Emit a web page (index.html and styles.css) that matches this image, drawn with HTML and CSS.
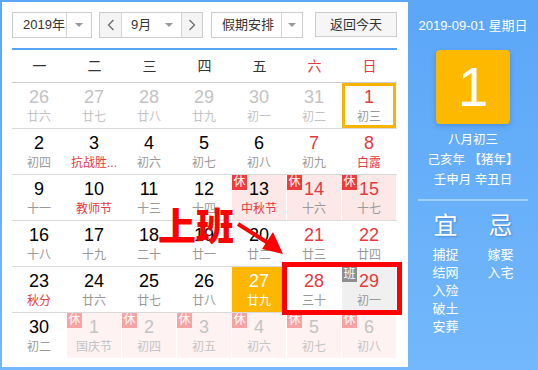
FILE: index.html
```html
<!DOCTYPE html>
<html lang="zh">
<head>
<meta charset="utf-8">
<title>万年历</title>
<link rel="stylesheet" href="styles.css">
</head>
<body>
<div class="app">
  <div class="main">
    <div class="toolbar">
      <div class="sel sel-year">
        <span class="sel-text">2019年</span>
        <span class="sel-arrow"><i class="tri"></i></span>
      </div>
      <div class="month">
        <span class="mbtn mbtn-prev"><svg width="8" height="12" viewBox="0 0 8 12"><polyline points="6.5,1 1.5,6 6.5,11" fill="none" stroke="#666" stroke-width="1.2"/></svg></span>
        <span class="mmid"><span class="mtext">9月</span><i class="tri"></i></span>
        <span class="mbtn mbtn-next"><svg width="8" height="12" viewBox="0 0 8 12"><polyline points="1.5,1 6.5,6 1.5,11" fill="none" stroke="#666" stroke-width="1.2"/></svg></span>
      </div>
      <div class="sel sel-hol">
        <span class="sel-text">假期安排</span>
        <span class="sel-arrow"><i class="tri"></i></span>
      </div>
      <div class="today-btn">返回今天</div>
    </div>
    <div class="bar"></div>
    <div class="weekhead">
      <span>一</span><span>二</span><span>三</span><span>四</span><span>五</span><span class="we">六</span><span class="we">日</span>
    </div>
    <div class="grid">
      <div class="row">
        <div class="cell other"><span class="n">26</span><span class="l">廿六</span></div>
        <div class="cell other"><span class="n">27</span><span class="l">廿七</span></div>
        <div class="cell other"><span class="n">28</span><span class="l">廿八</span></div>
        <div class="cell other"><span class="n">29</span><span class="l">廿九</span></div>
        <div class="cell other"><span class="n">30</span><span class="l">初一</span></div>
        <div class="cell other"><span class="n">31</span><span class="l">初二</span></div>
        <div class="cell today red"><span class="n">1</span><span class="l">初三</span></div>
      </div>
      <div class="row">
        <div class="cell"><span class="n">2</span><span class="l">初四</span></div>
        <div class="cell fest"><span class="n">3</span><span class="l">抗战胜...</span></div>
        <div class="cell"><span class="n">4</span><span class="l">初六</span></div>
        <div class="cell"><span class="n">5</span><span class="l">初七</span></div>
        <div class="cell"><span class="n">6</span><span class="l">初八</span></div>
        <div class="cell red"><span class="n">7</span><span class="l">初九</span></div>
        <div class="cell red fest"><span class="n">8</span><span class="l">白露</span></div>
      </div>
      <div class="row">
        <div class="cell"><span class="n">9</span><span class="l">十一</span></div>
        <div class="cell fest"><span class="n">10</span><span class="l">教师节</span></div>
        <div class="cell"><span class="n">11</span><span class="l">十三</span></div>
        <div class="cell"><span class="n">12</span><span class="l">十四</span></div>
        <div class="cell rest fest"><i class="tag">休</i><span class="n">13</span><span class="l">中秋节</span></div>
        <div class="cell rest red"><i class="tag">休</i><span class="n">14</span><span class="l">十六</span></div>
        <div class="cell rest red"><i class="tag">休</i><span class="n">15</span><span class="l">十七</span></div>
      </div>
      <div class="row">
        <div class="cell"><span class="n">16</span><span class="l">十八</span></div>
        <div class="cell"><span class="n">17</span><span class="l">十九</span></div>
        <div class="cell"><span class="n">18</span><span class="l">二十</span></div>
        <div class="cell"><span class="n">19</span><span class="l">廿一</span></div>
        <div class="cell"><span class="n">20</span><span class="l">廿二</span></div>
        <div class="cell red"><span class="n">21</span><span class="l">廿三</span></div>
        <div class="cell red"><span class="n">22</span><span class="l">廿四</span></div>
      </div>
      <div class="row">
        <div class="cell fest"><span class="n">23</span><span class="l">秋分</span></div>
        <div class="cell"><span class="n">24</span><span class="l">廿六</span></div>
        <div class="cell"><span class="n">25</span><span class="l">廿七</span></div>
        <div class="cell"><span class="n">26</span><span class="l">廿八</span></div>
        <div class="cell selected"><span class="n">27</span><span class="l">廿九</span></div>
        <div class="cell red"><span class="n">28</span><span class="l">三十</span></div>
        <div class="cell red work"><i class="tag tag-work">班</i><span class="n">29</span><span class="l">初一</span></div>
      </div>
      <div class="row row-last">
        <div class="cell"><span class="n">30</span><span class="l">初二</span></div>
        <div class="cell other rest"><i class="tag">休</i><span class="n">1</span><span class="l">国庆节</span></div>
        <div class="cell other rest"><i class="tag">休</i><span class="n">2</span><span class="l">初四</span></div>
        <div class="cell other rest"><i class="tag">休</i><span class="n">3</span><span class="l">初五</span></div>
        <div class="cell other rest"><i class="tag">休</i><span class="n">4</span><span class="l">初六</span></div>
        <div class="cell other rest"><i class="tag">休</i><span class="n">5</span><span class="l">初七</span></div>
        <div class="cell other rest"><i class="tag">休</i><span class="n">6</span><span class="l">初八</span></div>
      </div>
    </div>
  </div>
  <div class="side">
    <div class="s-date">2019-09-01 星期日</div>
    <div class="s-big">1</div>
    <div class="s-lunar">
      <div>八月初三</div>
      <div>己亥年 【猪年】</div>
      <div>壬申月 辛丑日</div>
    </div>
    <div class="s-line"></div>
    <div class="yj">
      <div class="yj-col">
        <div class="yj-t">宜</div>
        <div class="yj-l"><div>捕捉</div><div>结网</div><div>入殓</div><div>破土</div><div>安葬</div></div>
      </div>
      <div class="yj-col">
        <div class="yj-t">忌</div>
        <div class="yj-l"><div>嫁娶</div><div>入宅</div></div>
      </div>
    </div>
  </div>
  <div class="note">上班</div>
  <svg class="arrow" width="60" height="40" viewBox="0 0 60 40">
    <line x1="2" y1="3" x2="32" y2="22" stroke="#f00" stroke-width="4"/>
    <polygon points="47,33 37,11 26,28" fill="#f00"/>
  </svg>
  <div class="redbox"></div>
</div>
</body>
</html>
```
FILE: styles.css
```css
* { box-sizing: border-box; }
html, body { margin: 0; padding: 0; }
body {
  font-family: "Liberation Sans", "Noto Sans CJK SC", sans-serif;
  background: #fff;
}
.app {
  position: relative;
  width: 538px;
  height: 370px;
  padding: 2px 0 3px 2px;
  display: flex;
  background: linear-gradient(#5ba6f7, #73b8fc);
}
.main {
  width: 406px;
  height: 365px;
  background: #fff;
  padding: 10px 11px 0 10px;
}
.toolbar {
  display: flex;
  height: 26px;
  font-size: 13px;
  color: #333;
}
.sel {
  display: flex;
  border: 1px solid #ccc;
  height: 26px;
  background: #fff;
}
.sel-year { width: 80px; }
.sel-hol { width: 92px; margin-left: 8px; }
.sel-text {
  flex: 1;
  padding-left: 10px;
  line-height: 24px;
  border-right: 1px solid #d6d6d6;
}
.sel-year .sel-text { flex: 0 0 54px; }
.sel-hol .sel-text { flex: 0 0 70px; }
.sel-arrow {
  flex: 1;
  display: flex;
  align-items: center;
  justify-content: center;
}
.tri {
  display: block;
  width: 0;
  height: 0;
  border-left: 4px solid transparent;
  border-right: 4px solid transparent;
  border-top: 4px solid #999;
}
.month {
  display: flex;
  width: 104px;
  height: 26px;
  margin-left: 7px;
  border: 1px solid #ccc;
}
.mbtn {
  display: flex;
  align-items: center;
  justify-content: center;
  background: #f4f4f4;
}
.mbtn-prev { width: 22px; border-right: 1px solid #d6d6d6; }
.mbtn-next { width: 21px; border-left: 1px solid #d6d6d6; }
.mmid {
  flex: 1;
  display: flex;
  align-items: center;
  padding-left: 9px;
}
.mtext { flex: 1; line-height: 24px; }
.mmid .tri { margin-right: 8px; }
.today-btn {
  margin-left: 12px;
  width: 82px;
  height: 25px;
  border: 1px solid #ccc;
  background: #f6f6f6;
  text-align: center;
  line-height: 23px;
  font-size: 13px;
  color: #333;
}
.bar {
  height: 2px;
  margin-top: 10px;
  background: #58a4f4;
}
.weekhead {
  display: flex;
  height: 33px;
  border-bottom: 1px solid #ccc;
  font-size: 14px;
  color: #333;
}
.weekhead span {
  width: 55px;
  text-align: center;
  line-height: 32px;
}
.weekhead .we { color: #e8383d; }
.row {
  display: flex;
  height: 46px;
  border-bottom: 1px solid #d9d9d9;
}
.row-last { border-bottom: 0; height: 45px; }
.cell {
  position: relative;
  width: 54px;
  height: 45px;
  margin-right: 1px;
  display: flex;
  flex-direction: column;
  align-items: center;
  padding-top: 4px;
}
.cell .n {
  font-size: 18px;
  line-height: 20px;
  color: #000;
}
.cell .l {
  font-size: 12px;
  line-height: 20px;
  color: #999;
  white-space: nowrap;
}
.red .n { color: #e8383d; }
.fest .l { color: #e8383d; }
.other .n, .other .l { color: #c3c3c3; }
.rest { background: #fde8e8; }
.other.rest { background: #fef2f2; }
.work { background: #f0f0f0; }
.tag {
  position: absolute;
  left: 0;
  top: 0;
  width: 15px;
  height: 15px;
  font-style: normal;
  font-size: 12px;
  line-height: 15px;
  text-align: center;
  color: #fff;
  background: #ee3c3c;
}
.other .tag { background: #f6a3a3; }
.tag-work { background: #8e8e8e; }
.today {
  border: 3px solid #f8b400;
  padding-top: 1px;
}
.today .l { line-height: 20px; }
.selected { background: #fdb702; }
.selected .n, .selected .l { color: #fff; }
.side {
  flex: 1;
  display: flex;
  flex-direction: column;
  align-items: center;
  color: #fff;
  padding-top: 14px;
}
.s-date {
  font-size: 13px;
  line-height: 20px;
  white-space: nowrap;
}
.s-big {
  margin-top: 14px;
  width: 74px;
  height: 74px;
  border-radius: 4px;
  background: #fdb800;
  box-shadow: 0 2px 5px rgba(0, 60, 140, 0.25);
  font-size: 55px;
  line-height: 74px;
  text-align: center;
  color: #fff;
}
.s-lunar {
  margin-top: 6px;
  font-size: 12.5px;
  line-height: 20px;
  text-align: center;
  white-space: nowrap;
}
.s-line {
  margin-top: 9px;
  width: 110px;
  height: 2px;
  background: rgba(255, 255, 255, 0.4);
}
.yj {
  display: flex;
  margin-top: 10px;
}
.yj-col {
  width: 55px;
  display: flex;
  flex-direction: column;
  align-items: center;
}
.yj-t {
  font-size: 24px;
  line-height: 30px;
  text-shadow: 1px 1px 2px rgba(0, 40, 100, 0.3);
}
.yj-l {
  margin-top: 5px;
  font-size: 13px;
  line-height: 18px;
}
.note {
  position: absolute;
  left: 158px;
  top: 205px;
  font-family: "Noto Sans CJK SC", sans-serif;
  font-weight: 900;
  font-size: 38px;
  line-height: 38px;
  color: #f00;
  white-space: nowrap;
}
.arrow {
  position: absolute;
  left: 236px;
  top: 221px;
}
.redbox {
  position: absolute;
  left: 282px;
  top: 262px;
  width: 120px;
  height: 53px;
  border: 5px solid #f00;
}
```
